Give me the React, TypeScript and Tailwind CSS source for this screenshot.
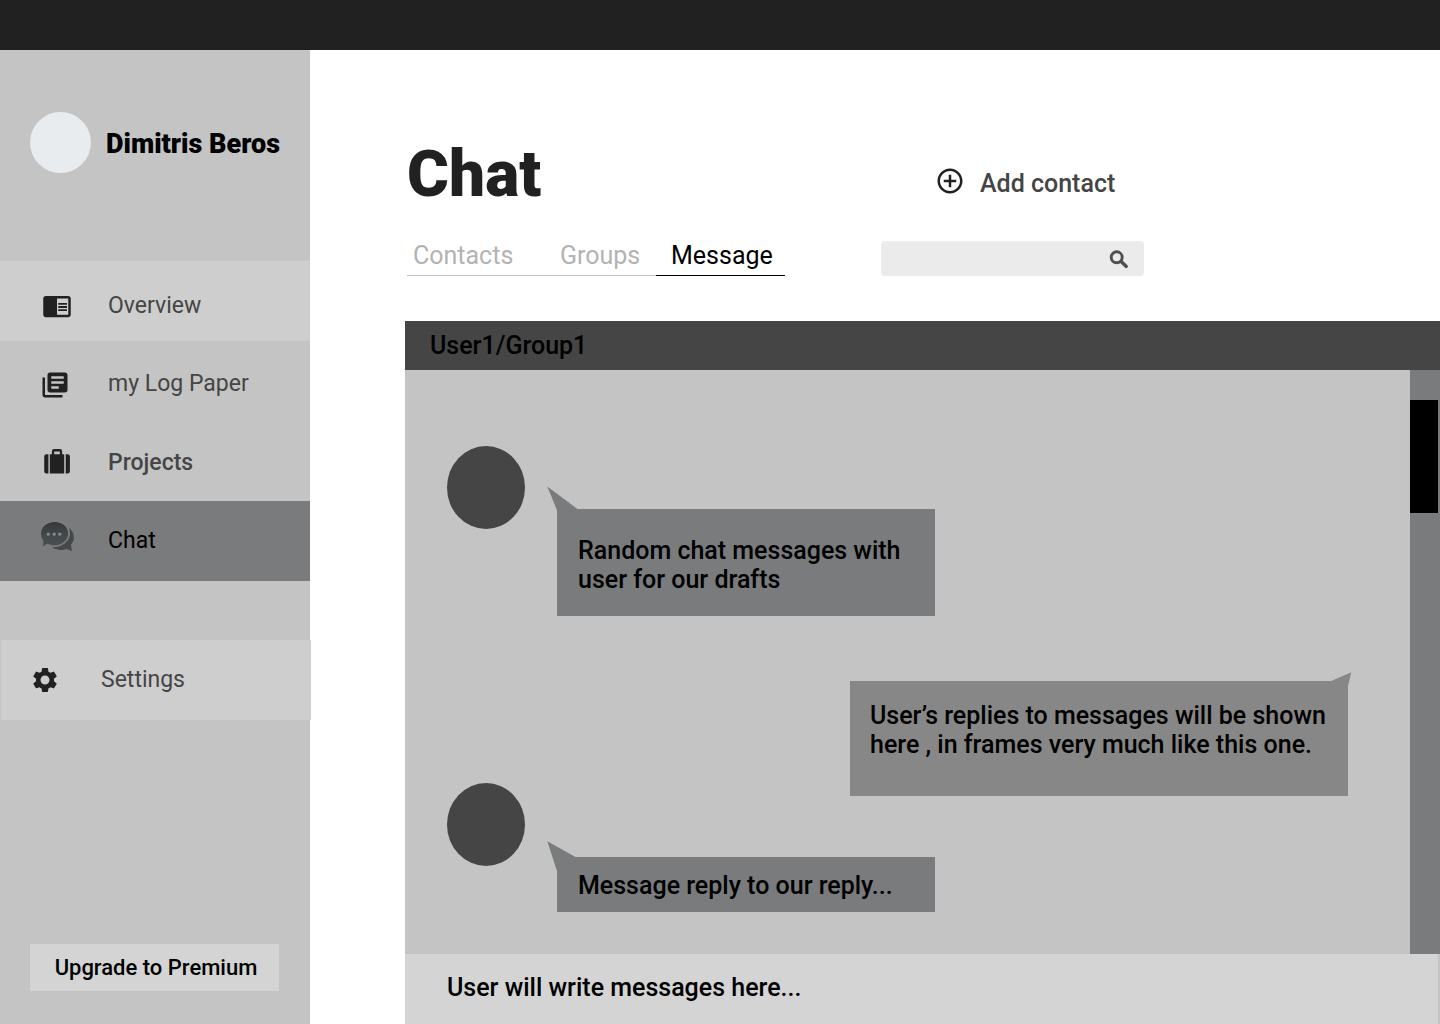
import type { ReactNode } from "react";
import { MdChromeReaderMode, MdLibraryBooks, MdAddCircleOutline, MdSettings } from "react-icons/md";

function SuitcaseIcon() {
  return (
    <svg width="26" height="25" viewBox="0 0 26 25" fill="#212121" className="ml-0.5 block">
      <path d="M3.4 5.2H2.6A2.4 2.4 0 0 0 .2 7.6v14.6a2.4 2.4 0 0 0 2.4 2.4h1.8V5.2zM22.6 5.2h-.9v19.4h1.8a2.4 2.4 0 0 0 2.4-2.4V7.6a2.4 2.4 0 0 0-2.4-2.4z" />
      <path fillRule="evenodd" d="M5.8 5.2h2.100V2.300A2.200 2.200 0 0 1 10.100.1h5.800a2.200 2.200 0 0 1 2.200 2.200v2.900h2.100v19.400H5.800zM10.200 5.200h5.600V2.500h-5.600z" />
    </svg>
  );
}

function ChatIcon() {
  return (
    <svg width="34" height="30" viewBox="0 0 34 30" className="mb-1.5 -ml-px block">
      <defs>
        <linearGradient id="bubble" x1="0" y1="0" x2="0" y2="1">
          <stop offset="0" stopColor="#34383b" />
          <stop offset="0.5" stopColor="#42474a" />
          <stop offset="1" stopColor="#4b5053" />
        </linearGradient>
      </defs>
      <path fill="#45494b" d="M28.200 5.700C31 8 32.900 11.400 32.900 15.100c0 2.900-1 5.600-2.900 7.700l.9 6.100-5.400-1.900c-4.600 1.900-10.300 1.200-14.300-1.700 9.700.3 17.800-5.600 17.800-13.700 0-2.100-.2-4.200-.8-5.900z" />
      <path fill="url(#bubble)" d="M13.700 0c7.600 0 13.400 5 13.400 11.600S21.300 23.300 13.700 23.300c-2.700 0-5.300-.6-7.500-1.500L1.900 24.300l.5-5.700A11 11 0 0 1 0 11.600C0 5 6.200 0 13.700 0z" />
      <g fill="#85898b">
        <circle cx="7.300" cy="12.200" r="1.600" />
        <circle cx="13.200" cy="12.200" r="1.600" />
        <circle cx="18.800" cy="12.200" r="1.600" />
      </g>
    </svg>
  );
}

function SearchIcon() {
  return (
    <svg width="20" height="20" viewBox="0 0 20 20" fill="none" stroke="#4f4f4f" className="mt-0.5 block">
      <circle cx="7.700" cy="7.300" r="5.500" strokeWidth="2.900" />
      <path d="M11.900 11.300l5.400 5.100" strokeWidth="3.400" strokeLinecap="round" />
    </svg>
  );
}

function NavItem({ icon, label, className }: { icon: ReactNode; label: string; className: string }) {
  return (
    <a className={`flex h-20 shrink-0 items-center ${className}`}>
      <span className="flex w-[66px] shrink-0">{icon}</span>
      <span className="whitespace-nowrap">{label}</span>
    </a>
  );
}

function Sidebar() {
  return (
    <aside className="flex w-[310px] shrink-0 flex-col bg-[#c4c4c4] text-[23px] leading-[27px] text-[#454545]">
      <div className="mt-[62px] flex h-[61px] items-center pl-[30px]">
        <div className="size-[61px] shrink-0 rounded-full bg-[#e8ecef]" />
        <div className="ml-[15px] mt-0.5 whitespace-nowrap text-[27px] leading-8 font-black text-black">Dimitris Beros</div>
      </div>
      <nav className="mt-[88px] flex flex-col">
        <NavItem className="bg-[#cecece] pl-[42px] pt-2" label="Overview" icon={<MdChromeReaderMode size={30} color="#212121" className="mt-0.5" />} />
        <NavItem className="pl-[42px] pt-1" label="my Log Paper" icon={<MdLibraryBooks size={30} color="#212121" className="mt-[3px] -ml-0.5" />} />
        <NavItem className="pt-0.5 pl-[42px] font-medium" label="Projects" icon={<span className="-mt-0.5"><SuitcaseIcon /></span>} />
        <NavItem className="bg-[#7a7b7c] pb-0.5 pl-[42px] text-black" label="Chat" icon={<ChatIcon />} />
      </nav>
      <NavItem className="relative left-px mt-[59px] w-[310px] bg-[#cecece] pb-0.5 pl-[34px]" label="Settings" icon={<MdSettings size={30} color="#212121" className="mt-0.5 -ml-[5px]" />} />
      <button className="mt-auto mb-[33px] ml-[30px] h-[47px] w-[249px] bg-[#d4d4d4] pl-[3px] text-[22px] font-medium whitespace-nowrap text-black">Upgrade to Premium</button>
    </aside>
  );
}

function Avatar() {
  return <div className="h-[83px] w-[78px] shrink-0 rounded-[50%] bg-[#454545]" />;
}

function Toolbar() {
  return (
    <header className="flex h-[271px] shrink-0 pl-[97px]">
      <div className="flex w-[378px] shrink-0 flex-col">
        <h1 className="mt-[87px] text-[64px] leading-[75px] font-black text-[#212121]">Chat</h1>
        <div className="mt-6 flex h-10 text-[25px] leading-[40px] text-[#b3b3b3]">
          <span className="w-[147px] border-b border-[#c4c4c4] pl-1.5">Contacts</span>
          <span className="w-[102px] border-b border-[#c4c4c4] pl-1.5">Groups</span>
          <span className="w-[129px] border-b border-black pl-[15px] text-black">Message</span>
        </div>
      </div>
      <div className="ml-24 flex flex-col">
        <button className="mt-[116px] ml-[54px] flex h-[30px] items-center whitespace-nowrap text-[25px] leading-[29px] font-medium text-[#454545]">
          <MdAddCircleOutline size={30} color="#212121" className="mr-[15px]" />
          <span className="mt-1">Add contact</span>
        </button>
        <div className="mt-[45px] flex h-[35px] w-[263px] items-center justify-end rounded bg-[#ebebeb] pr-[15px]">
          <SearchIcon />
        </div>
      </div>
    </header>
  );
}

function Conversation() {
  return (
    <section className="ml-[95px] flex flex-1 flex-col bg-[#c4c4c4] text-[25px] leading-[29px] font-medium text-black">
      <div className="h-[49px] shrink-0 bg-[#454545] pt-2.5 pl-[25px]">User1/Group1</div>
      <div className="flex h-[584px] shrink-0">
        <div className="flex w-[1005px] shrink-0 flex-col pl-[42px]">
          <div className="mt-[76px] flex items-start">
            <Avatar />
            <div className="relative mt-[63px] ml-8 h-[107px] w-[378px] bg-[#7a7b7c] pt-[27px] pl-[21px]">
              <svg className="absolute -top-[23px] -left-[10px]" width="31" height="26" fill="#7a7b7c"><path d="M.3.5L30.500 23V26H10.300V25z" /></svg>
              Random chat messages with<br />user for our drafts
            </div>
          </div>
          <div className="relative mt-[65px] ml-[403px] h-[115px] w-[498px] bg-[#878787] pt-5 pl-5 whitespace-nowrap">
            <svg className="absolute -top-[9px] -right-[4px]" width="22" height="16" fill="#878787"><path d="M21.300.2L0 9.500V10H18V14z" /></svg>
            User’s replies to messages will be shown<br />here , in frames very much like this one.
          </div>
          <div className="-mt-[13px] flex items-start">
            <Avatar />
            <div className="relative mt-[74px] ml-8 h-[55px] w-[378px] bg-[#7a7b7c] pt-3.5 pl-[21px]">
              <svg className="absolute -top-[16px] -left-[10px]" width="30" height="31" fill="#7a7b7c"><path d="M.3.200L28.500 16V30H10z" /></svg>
              <span className="relative">Message reply to our reply...</span>
            </div>
          </div>
        </div>
        <div className="flex-1 bg-[#7a7b7c] pt-[30px]">
          <div className="h-[113px] w-7 bg-black" />
        </div>
      </div>
      <div className="mr-0.5 flex-1 bg-[#d4d4d4] pt-[19px] pl-[42px]">User will write messages here...</div>
    </section>
  );
}

export default function App() {
  return (
    <div className="flex h-[1024px] w-[1440px] flex-col overflow-hidden bg-white font-['Roboto',sans-serif]">
      <div className="h-[50px] shrink-0 bg-[#212121]" />
      <div className="flex min-h-0 flex-1">
        <Sidebar />
        <main className="flex min-w-0 flex-1 flex-col">
          <Toolbar />
          <Conversation />
        </main>
      </div>
    </div>
  );
}
